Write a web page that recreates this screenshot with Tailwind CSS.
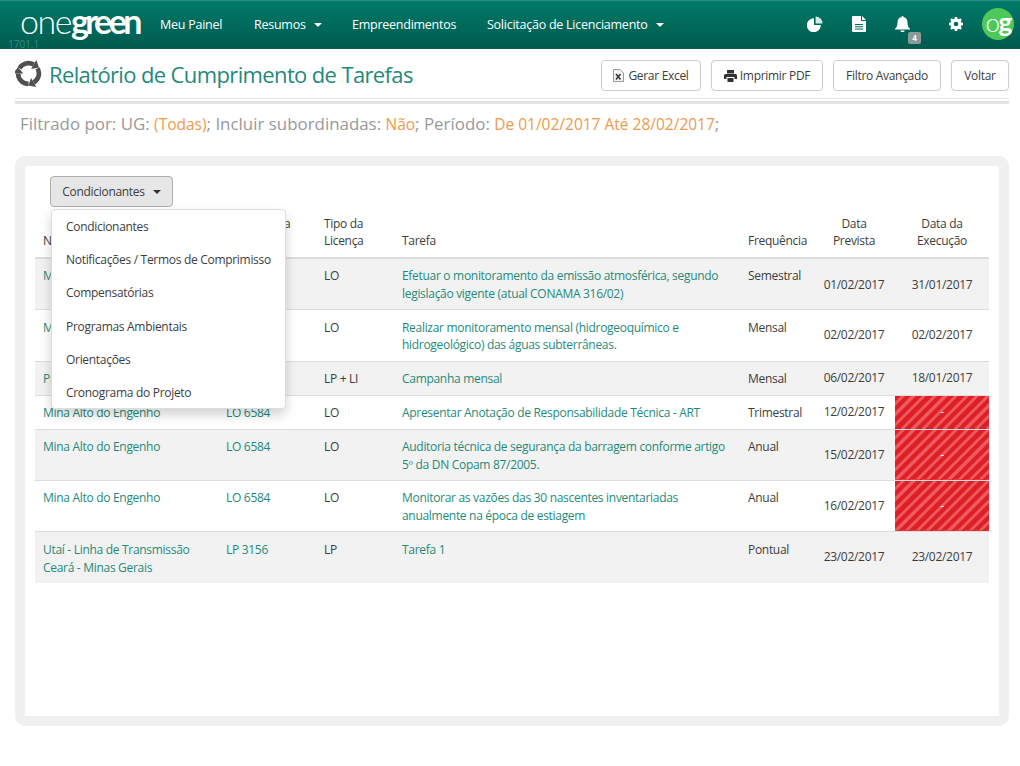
<!doctype html>
<html>
  <head>
    <meta charset="UTF-8" />
    <title>Relatório de Cumprimento de Tarefas</title>
    <script src="https://cdn.jsdelivr.net/npm/@tailwindcss/browser@4"></script>
  </head>
  <body class="bg-white font-['Open_Sans',sans-serif] text-[12px] tracking-[-0.3px] text-[#3d3d3d] w-[1020px] h-[766px] overflow-hidden">
    <!-- top bar -->
    <header class="relative h-[49px] flex items-center bg-gradient-to-b from-[#007a6a] to-[#005a4d] border-t border-[#2a8f80] text-white">
      <div class="w-[160px] pl-[20px] -mt-[9px] text-[34px] leading-[38px] tracking-[-1.5px] font-['Lato',sans-serif]"><span class="font-light">one</span><span class="font-bold tracking-[-3.500px]">green</span></div>
      <span class="absolute left-[8px] top-[37px] text-[10px] leading-[12px] tracking-normal text-[#2f8f80]">1701.1</span>
      <nav class="flex items-center text-[12.5px] tracking-[-0.25px]">
        <a class="w-[94px]">Meu Painel</a>
        <a class="w-[98px] flex items-center gap-[8px]">Resumos <i class="border-x-[4px] border-x-transparent border-t-[4px] border-t-white"></i></a>
        <a class="w-[135px]">Empreendimentos</a>
        <a class="flex items-center gap-[8px]">Solicitação de Licenciamento <i class="border-x-[4px] border-x-transparent border-t-[4px] border-t-white"></i></a>
      </nav>
      <div class="ml-auto flex items-center">
        <svg class="w-[16px] h-[16px] mr-[29px] -mt-[2px]" viewBox="0 0 16 16" fill="#fff"><path d="M7 2.200A7 7 0 1 0 13.800 9H7z"/><path d="M8.600 0.500V7.400h6.900A7 7 0 0 0 8.600 0.500z" opacity="0.85"/></svg>
        <svg class="w-[14px] h-[16px] mr-[29px] -mt-[2px]" viewBox="0 0 14 16" fill="#fff"><path d="M1 0h8v5h5v10a1 1 0 0 1-1 1H1a1 1 0 0 1-1-1V1a1 1 0 0 1 1-1zm9 0 4 4h-4zM3 8v1h8V8zm0 2.200v1h8v-1zm0 2.200v1h8v-1z" fill-rule="evenodd"/></svg>
        <div class="relative mr-[39px] -mt-[2px]">
          <svg class="w-[15px] h-[16px] block" viewBox="0 0 15 16" fill="#fff"><path d="M7.500 0a1 1 0 0 1 1 1.100C11 1.600 12.500 3.700 12.500 6.500c0 3.500 1 4.800 2.500 6.300v.7H0v-.7C1.500 11.300 2.500 10 2.500 6.500c0-2.800 1.500-4.900 4-5.400A1 1 0 0 1 7.500 0zM5.500 14.500h4a2 2 0 0 1-4 0z"/></svg>
          <span class="absolute left-[13px] top-[16px] w-[13px] h-[12px] rounded-[2px] bg-[#8a9a96] text-[8px] leading-[12px] tracking-normal text-center font-bold">4</span>
        </div>
        <svg class="w-[14px] h-[14px] mr-[19px] -mt-[2px]" viewBox="0 0 14 14" fill="#fff"><path fill-rule="evenodd" d="M5.800 0h2.400l.3 1.800 1.200.5L11.300 1.200l1.600 1.600-1.100 1.500.5 1.200 1.700.3v2.400l-1.700.3-.5 1.200 1.100 1.500-1.600 1.600-1.600-1.100-1.200.5-.3 1.800H5.800l-.3-1.800-1.200-.5-1.600 1.100-1.600-1.600 1.100-1.500-.5-1.200L0 8.200V5.800l1.700-.3.5-1.200L1.100 2.800l1.600-1.600 1.600 1.100 1.200-.5zM7 4.700a2.300 2.300 0 1 0 0 4.600 2.300 2.300 0 0 0 0-4.600z"/></svg>
        <div class="w-[32px] h-[32px] rounded-full bg-[#4fc85a] mr-[6px] -mt-[2px] flex items-center justify-center text-[26px] leading-[26px] tracking-[-1.5px] font-['Lato',sans-serif] pb-[5px]"><span class="font-light">o</span><span class="font-bold">g</span></div>
      </div>
    </header>

    <main class="pl-[15px] pr-[11px]">
      <!-- page title -->
      <div class="flex items-center h-[50px] pt-[4px] border-b border-[#e4e4e4]">
        <svg class="w-[27px] h-[27px] mr-[7px] -mt-[4px]" viewBox="0 0 26 26" fill="#4f4f4f">
          <g><path d="M4.340 8A10 10 0 0 1 18 4.340" fill="none" stroke="#4f4f4f" stroke-width="4.500"/><path d="M20.500 0 15.500 8.670 23.200 7.340z"/></g>
          <g transform="rotate(120 13 13)"><path d="M4.340 8A10 10 0 0 1 18 4.340" fill="none" stroke="#4f4f4f" stroke-width="4.500"/><path d="M20.500 0 15.500 8.670 23.200 7.340z"/></g>
          <g transform="rotate(240 13 13)"><path d="M4.340 8A10 10 0 0 1 18 4.340" fill="none" stroke="#4f4f4f" stroke-width="4.500"/><path d="M20.500 0 15.500 8.670 23.200 7.340z"/></g>
        </svg>
        <h1 class="text-[22px] leading-[28px] -mt-[3px] tracking-[-0.63px] text-[#1f8a7a]">Relatório de Cumprimento de Tarefas</h1>
        <div class="ml-auto flex gap-[10px]">
          <button class="h-[31px] w-[100px] border border-[#ccc] rounded-[4px] bg-white flex items-center justify-center gap-[4px]"><svg class="w-[11px] h-[13px]" viewBox="0 0 11 13"><path d="M.5.500h6.500l3.500 3.500v8.500H.5z" fill="#f4f4f4" stroke="#999"/><path d="M3 5l4.500 5.500M7.500 5 3 10.500" stroke="#333" stroke-width="1.500"/></svg>Gerar Excel</button>
          <button class="h-[31px] w-[112px] border border-[#ccc] rounded-[4px] bg-white flex items-center justify-center gap-[3px]"><svg class="w-[13px] h-[12px]" viewBox="0 0 13 12" fill="#333"><path d="M3 0h7v3.500H3zM1.500 4h10A1.500 1.500 0 0 1 13 5.500V9h-2.500V7h-8v2H0V5.500A1.500 1.500 0 0 1 1.500 4zM3.500 8h6v4h-6z"/></svg>Imprimir PDF</button>
          <button class="h-[31px] w-[108px] border border-[#ccc] rounded-[4px] bg-white">Filtro Avançado</button>
          <button class="h-[31px] w-[58px] border border-[#ccc] rounded-[4px] bg-white">Voltar</button>
        </div>
      </div>
      <div class="h-[3px] bg-[#e4e4e4] mt-[2px]"></div>

      <p class="mt-[9px] pl-[5px] text-[16.900px] leading-[22px] tracking-normal text-[#999]">Filtrado por: UG: <span class="text-[#ef9a4d] text-[15.500px]">(Todas)</span>; Incluir subordinadas: <span class="text-[#ef9a4d] text-[15.500px]">Não</span>; Período: <span class="text-[#ef9a4d] text-[15.500px]">De 01/02/2017 Até 28/02/2017</span>;</p>

      <!-- report panel -->
      <section class="relative mt-[21px] h-[570px] bg-white border-[10px] border-[#f0f0f0] rounded-[10px] px-[10px] pt-[10px]">
        <button class="ml-[15px] h-[31px] w-[123px] flex items-center justify-center gap-[8px] border border-[#adadad] rounded-[4px] bg-[#e6e6e6]">Condicionantes <i class="border-x-[4px] border-x-transparent border-t-[4px] border-t-[#333]"></i></button>

        <table class="mt-[2px] w-[954px] table-fixed border-collapse text-left">
          <thead class="align-bottom">
            <tr class="h-[49px] border-b-2 border-[#ddd]">
              <th class="w-[183px] pl-[8px] pb-[8px] font-normal leading-[17px]">Nome do Empreendimento</th>
              <th class="w-[98px] pl-[8px] pb-[8px] font-normal leading-[17px]">Processo da Licença</th>
              <th class="w-[78px] pl-[8px] pb-[8px] font-normal leading-[17px]">Tipo da Licença</th>
              <th class="w-[346px] pl-[8px] pb-[8px] font-normal leading-[17px]">Tarefa</th>
              <th class="w-[75px] pl-[8px] pb-[8px] font-normal leading-[17px]">Frequência</th>
              <th class="w-[80px] pr-[2px] pb-[8px] text-center font-normal leading-[17px]">Data<br />Prevista</th>
              <th class="pb-[8px] text-center font-normal leading-[17px]">Data da<br />Execução</th>
            </tr>
          </thead>
          <tbody class="align-top leading-[18px]">
            <tr class="h-[51px] bg-[#f2f2f2] border-b border-[#ddd]">
              <td class="pl-[8px] pt-[8px] text-[#1f8a7a]">Mina Alto do Engenho</td>
              <td class="pl-[8px] pt-[8px] text-[#1f8a7a]">LO 6584</td>
              <td class="pl-[8px] pt-[8px]">LO</td>
              <td class="pl-[8px] pt-[8px] text-[#1f8a7a]">Efetuar o monitoramento da emissão atmosférica, segundo legislação vigente (atual CONAMA 316/02)</td>
              <td class="pl-[8px] pt-[8px]">Semestral</td>
              <td class="pt-[2px] pr-[2px] text-center align-middle">01/02/2017</td>
              <td class="pt-[2px] text-center align-middle">31/01/2017</td>
            </tr>
            <tr class="h-[52px] border-b border-[#ddd]">
              <td class="pl-[8px] pt-[9px] text-[#1f8a7a]">Mina Alto do Engenho</td>
              <td class="pl-[8px] pt-[9px] text-[#1f8a7a]">LO 6584</td>
              <td class="pl-[8px] pt-[9px]">LO</td>
              <td class="pl-[8px] pt-[9px] leading-[17px] text-[#1f8a7a]">Realizar monitoramento mensal (hidrogeoquímico e hidrogeológico) das águas subterrâneas.</td>
              <td class="pl-[8px] pt-[9px]">Mensal</td>
              <td class="pr-[2px] text-center align-middle">02/02/2017</td>
              <td class="text-center align-middle">02/02/2017</td>
            </tr>
            <tr class="h-[34px] bg-[#f2f2f2] border-b border-[#ddd]">
              <td class="pl-[8px] pt-[8px] text-[#1f8a7a]">Projeto Serra Azul</td>
              <td class="pl-[8px] pt-[8px] text-[#1f8a7a]">LO 6584</td>
              <td class="pl-[8px] pt-[8px]">LP + LI</td>
              <td class="pl-[8px] pt-[8px] text-[#1f8a7a]">Campanha mensal</td>
              <td class="pl-[8px] pt-[8px]">Mensal</td>
              <td class="pr-[2px] text-center align-middle">06/02/2017</td>
              <td class="text-center align-middle">18/01/2017</td>
            </tr>
            <tr class="h-[34px] border-b border-[#ddd]">
              <td class="pl-[8px] pt-[8px] text-[#1f8a7a]">Mina Alto do Engenho</td>
              <td class="pl-[8px] pt-[8px] text-[#1f8a7a]">LO 6584</td>
              <td class="pl-[8px] pt-[8px]">LO</td>
              <td class="pl-[8px] pt-[8px] text-[#1f8a7a]">Apresentar Anotação de Responsabilidade Técnica - ART</td>
              <td class="pl-[8px] pt-[8px]">Trimestral</td>
              <td class="pr-[2px] text-center align-middle">12/02/2017</td>
              <td class="text-center align-middle text-white bg-[repeating-linear-gradient(135deg,#dd1f26_0,#dd1f26_4.500px,#f0595f_4.500px,#f0595f_7.500px)]">-</td>
            </tr>
            <tr class="h-[51px] bg-[#f2f2f2] border-b border-[#ddd]">
              <td class="pl-[8px] pt-[8px] text-[#1f8a7a]">Mina Alto do Engenho</td>
              <td class="pl-[8px] pt-[8px] text-[#1f8a7a]">LO 6584</td>
              <td class="pl-[8px] pt-[8px]">LO</td>
              <td class="pl-[8px] pt-[8px] text-[#1f8a7a]">Auditoria técnica de segurança da barragem conforme artigo<br />5º da DN Copam 87/2005.</td>
              <td class="pl-[8px] pt-[8px]">Anual</td>
              <td class="pr-[2px] text-center align-middle">15/02/2017</td>
              <td class="text-center align-middle text-white bg-[repeating-linear-gradient(135deg,#dd1f26_0,#dd1f26_4.500px,#f0595f_4.500px,#f0595f_7.500px)]">-</td>
            </tr>
            <tr class="h-[51px] border-b border-[#ddd]">
              <td class="pl-[8px] pt-[8px] text-[#1f8a7a]">Mina Alto do Engenho</td>
              <td class="pl-[8px] pt-[8px] text-[#1f8a7a]">LO 6584</td>
              <td class="pl-[8px] pt-[8px]">LO</td>
              <td class="pl-[8px] pt-[8px] text-[#1f8a7a]">Monitorar as vazões das 30 nascentes inventariadas anualmente na época de estiagem</td>
              <td class="pl-[8px] pt-[8px]">Anual</td>
              <td class="pr-[2px] text-center align-middle">16/02/2017</td>
              <td class="text-center align-middle text-white bg-[repeating-linear-gradient(135deg,#dd1f26_0,#dd1f26_4.500px,#f0595f_4.500px,#f0595f_7.500px)]">-</td>
            </tr>
            <tr class="h-[52px] bg-[#f2f2f2]">
              <td class="pl-[8px] pt-[9px] text-[#1f8a7a]">Utaí - Linha de Transmissão Ceará - Minas Gerais</td>
              <td class="pl-[8px] pt-[9px] text-[#1f8a7a]">LP 3156</td>
              <td class="pl-[8px] pt-[9px]">LP</td>
              <td class="pl-[8px] pt-[9px] text-[#1f8a7a]">Tarefa 1</td>
              <td class="pl-[8px] pt-[9px]">Pontual</td>
              <td class="pr-[2px] text-center align-middle">23/02/2017</td>
              <td class="text-center align-middle">23/02/2017</td>
            </tr>
          </tbody>
        </table>

        <!-- open dropdown -->
        <ul class="absolute left-[26px] top-[43px] w-[235px] h-[200px] bg-white border border-[#ddd] rounded-[4px] shadow-[0_6px_12px_rgba(0,0,0,0.175)]">
          <li class="h-[33.200px] pl-[14px] leading-[33px]">Condicionantes</li>
          <li class="h-[33.200px] pl-[14px] leading-[33px]">Notificações / Termos de Comprimisso</li>
          <li class="h-[33.200px] pl-[14px] leading-[33px]">Compensatórias</li>
          <li class="h-[33.200px] pl-[14px] leading-[33px]">Programas Ambientais</li>
          <li class="h-[33.200px] pl-[14px] leading-[33px]">Orientações</li>
          <li class="h-[33.200px] pl-[14px] leading-[33px]">Cronograma do Projeto</li>
        </ul>
      </section>
    </main>
  </body>
</html>
